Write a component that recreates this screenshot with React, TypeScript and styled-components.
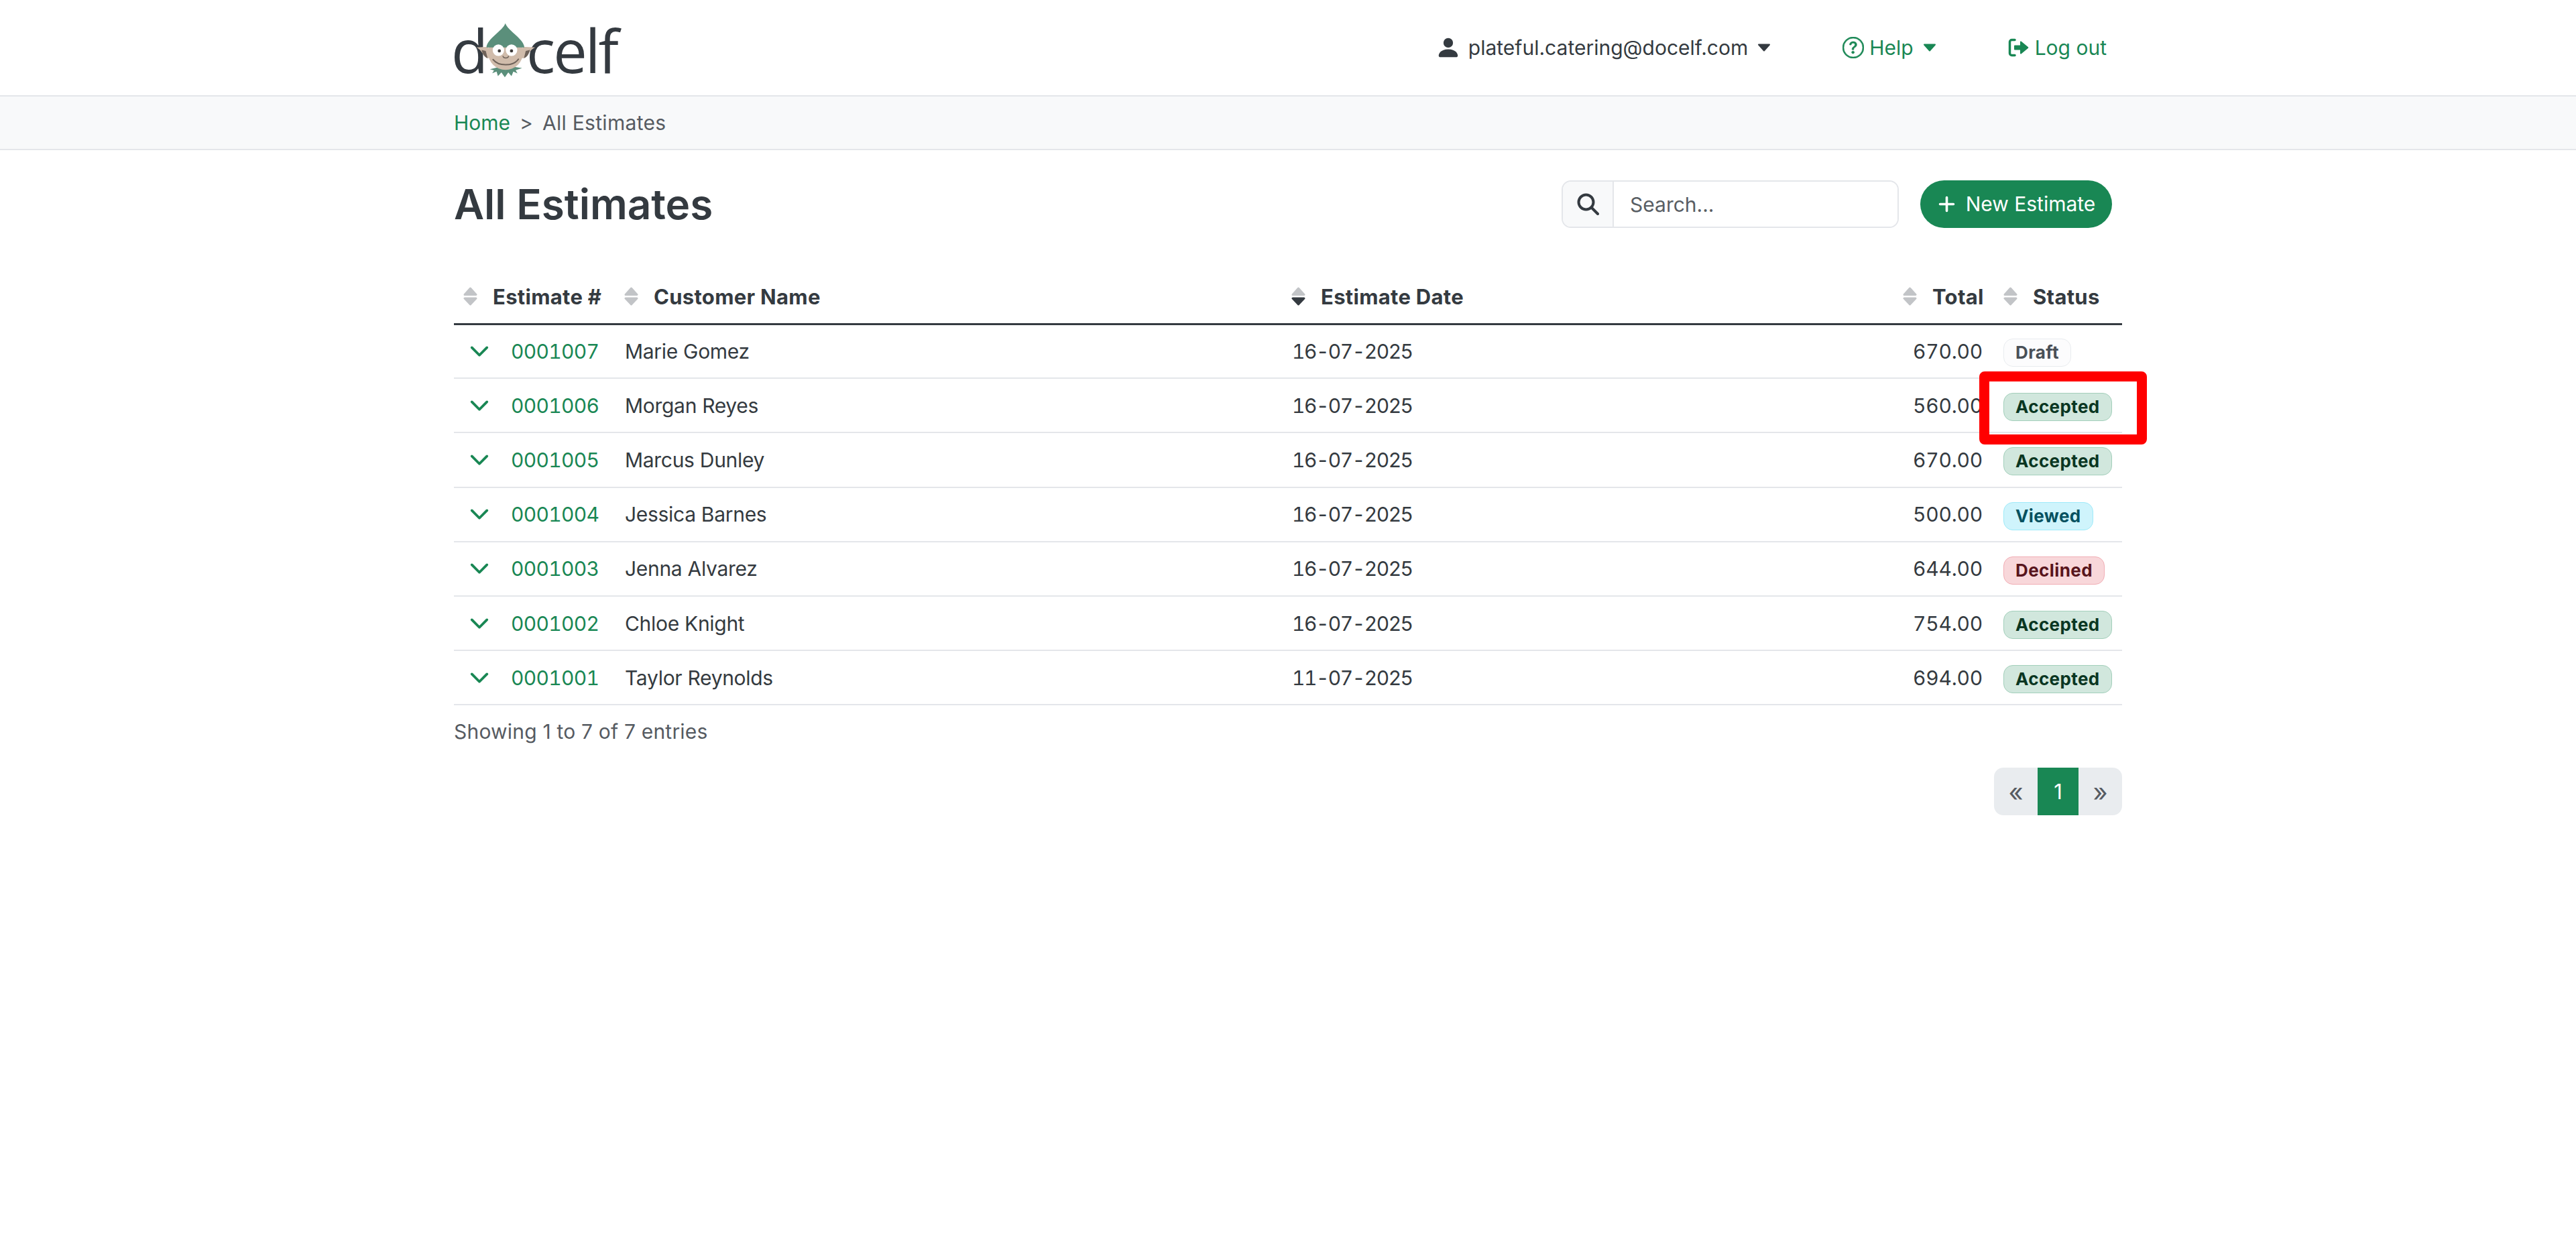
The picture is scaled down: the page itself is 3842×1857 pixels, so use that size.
import React from "react";
import styled, { createGlobalStyle } from "styled-components";
import { BsChevronDown, BsPersonFill, BsPlusLg, BsQuestionCircle } from "react-icons/bs";

const GlobalStyle = createGlobalStyle`
  html, body {
    margin: 0;
    padding: 0;
    background: #fff;
    color: #343a40;
    font-family: Inter, "Noto Sans", sans-serif;
    font-size: 30px;
  }
  * { box-sizing: border-box; }
`;

const Page = styled.div`
  position: relative;
  min-height: 1857px;
  overflow: hidden;
`;

const Container = styled.div`
  width: 2488px;
  margin: 0 auto;
`;

const TopBar = styled.header`
  height: 144px;
  border-bottom: 2px solid #e4e6ea;
`;

const TopBarInner = styled(Container)`
  height: 100%;
  display: flex;
  align-items: center;
  justify-content: space-between;
  padding-right: 23px;
`;

const Logo = styled.div`
  display: flex;
  align-items: flex-start;
  height: 80px;
  margin: 5px 0 0 -4px;
  font-family: "Open Sans", sans-serif;
  font-size: 90px;
  font-weight: 500;
  line-height: 80px;
  letter-spacing: -3px;
  color: #343a40;
`;

const ElfMark = styled.svg`
  width: 95px;
  height: 84px;
  margin: -2px -17px 0 -18px;
  position: relative;
  flex: none;
`;

const Nav = styled.nav`
  display: flex;
  align-items: center;
  gap: 107px;
`;

const NavItem = styled.a<{ $green?: boolean }>`
  display: flex;
  align-items: center;
  gap: ${(p) => (p.$green ? "8px" : "14px")};
  color: ${(p) => (p.$green ? "#198754" : "#343a40")};
  font-size: 30px;
  line-height: 40px;
  white-space: nowrap;
`;

const PersonIcon = styled(BsPersonFill)`
  margin-right: -3px;
  color: #343a40;
`;

const CaretIcon = styled.svg<{ $gap: number }>`
  width: 20px;
  height: 12px;
  margin-left: ${(p) => p.$gap}px;
`;

const Crumbs = styled.div`
  height: 80px;
  background: #f8f9fa;
  border-bottom: 2px solid #e4e6ea;
`;

const CrumbsInner = styled(Container)`
  height: 100%;
  display: flex;
  align-items: center;
  gap: 14px;
  font-size: 30px;
  color: #565b62;
`;

const CrumbLink = styled.a`
  color: #198754;
`;

const CrumbCurrent = styled.span`
  letter-spacing: 0.3px;
`;

const TitleRow = styled.div`
  display: flex;
  align-items: center;
  justify-content: space-between;
  margin-top: 45px;
  height: 71px;
  padding-right: 15px;
`;

const Title = styled.h1`
  margin: 0;
  font-size: 62px;
  font-weight: 600;
  line-height: 71px;
  color: #343a40;
`;

const TitleActions = styled.div`
  display: flex;
  align-items: stretch;
  gap: 32px;
  height: 71px;
`;

const SearchBox = styled.div`
  width: 503px;
  display: flex;
  border: 2px solid #e4e6ea;
  border-radius: 14px;
  overflow: hidden;
`;

const SearchPrefix = styled.div`
  width: 76px;
  display: flex;
  align-items: center;
  justify-content: center;
  background: #f8f9fa;
  border-right: 2px solid #e4e6ea;
`;

const SearchInput = styled.input`
  flex: 1;
  min-width: 0;
  border: 0;
  outline: 0;
  padding: 0 24px;
  font: inherit;
  font-size: 30px;
  color: #343a40;
  &::placeholder {
    color: #595e64;
    opacity: 1;
  }
`;

const NewButton = styled.button`
  width: 286px;
  display: flex;
  align-items: center;
  justify-content: center;
  gap: 14px;
  padding-bottom: 2px;
  border: 0;
  border-radius: 36px;
  background: #198754;
  color: #fff;
  font: inherit;
  font-size: 30px;
  white-space: nowrap;
`;

const Table = styled.table`
  width: 2488px;
  margin-top: 79px;
  border-collapse: collapse;
  table-layout: fixed;
`;

const HeadRow = styled.tr`
  height: 64px;
  border-bottom: 3px solid #343a40;
`;

const HeadCell = styled.th`
  padding: 0 0 16px 14px;
  font-size: 31px;
  font-weight: 700;
  letter-spacing: 0.3px;
  color: #343a40;
  text-align: left;
  white-space: nowrap;
`;

const HeadInner = styled.div<{ $right?: boolean }>`
  display: flex;
  align-items: center;
  gap: 23px;
  padding-right: ${(p) => (p.$right ? "17px" : "0")};
  justify-content: ${(p) => (p.$right ? "space-between" : "flex-start")};
`;

const SortIcon = styled.svg`
  width: 21px;
  height: 28px;
  flex: none;
`;

const Row = styled.tr`
  height: 81.2px;
  border-bottom: 2px solid #e4e6ea;
`;

const Cell = styled.td`
  padding: 0 0 0 15px;
  font-size: 30px;
  letter-spacing: -0.3px;
  color: #343a40;
  white-space: nowrap;
`;

const DateCell = styled(Cell)`
  letter-spacing: -1.5px;
  font-variant-numeric: tabular-nums;
`;

const TotalCell = styled(Cell)`
  padding: 0 17px 0 0;
  text-align: right;
  letter-spacing: -0.2px;
  font-variant-numeric: tabular-nums;
`;

const NumberWrap = styled.div`
  display: flex;
  align-items: center;
  gap: 32px;
  padding-left: 8px;
  color: #198754;
  letter-spacing: -0.7px;
  font-variant-numeric: tabular-nums;
`;

const toneColors: Record<string, { bg: string; line: string; fg: string }> = {
  Draft: { bg: "#fcfcfd", line: "#e9ecef", fg: "#495057" },
  Accepted: { bg: "#d1e7dd", line: "#a3cfbb", fg: "#0a3622" },
  Viewed: { bg: "#cff4fc", line: "#9eeaf9", fg: "#055160" },
  Declined: { bg: "#f8d7da", line: "#f1aeb5", fg: "#58151c" },
};

const Badge = styled.span<{ $tone: string }>`
  display: inline-block;
  height: 42px;
  margin: 5px 0 0 -1px;
  padding: 0 17px;
  border: 1.5px solid ${(p) => toneColors[p.$tone].line};
  border-radius: 14px;
  background: ${(p) => toneColors[p.$tone].bg};
  color: ${(p) => toneColors[p.$tone].fg};
  font-size: 26px;
  font-weight: 700;
  letter-spacing: 0.4px;
  line-height: 39px;
  vertical-align: middle;
`;

const Showing = styled.div`
  margin-top: 17px;
  line-height: 45px;
  font-size: 30px;
  letter-spacing: 0.2px;
  color: #565b62;
`;

const PagerRow = styled.div`
  display: flex;
  justify-content: flex-end;
  margin-top: 31px;
`;

const Pager = styled.div`
  display: flex;
  height: 71px;
  border-radius: 14px;
  overflow: hidden;
  background: #e9ecef;
`;

const PageCell = styled.div<{ $active?: boolean }>`
  width: ${(p) => (p.$active ? "61px" : "65px")};
  display: flex;
  align-items: center;
  justify-content: center;
  background: ${(p) => (p.$active ? "#198754" : "transparent")};
  color: ${(p) => (p.$active ? "#fff" : "#565b62")};
  font-size: ${(p) => (p.$active ? "31px" : "38px")};
`;

const Highlight = styled.div`
  position: absolute;
  left: 2952px;
  top: 554px;
  width: 250px;
  height: 109px;
  border: 15px solid #ff0000;
  border-radius: 8px;
`;

const Caret = ({ color, gap }: { color: string; gap: number }) => (
  <CaretIcon $gap={gap} viewBox="0 0 20 12">
    <path d="M2 1.5h16L10 10.5z" fill={color} stroke={color} strokeWidth="2" strokeLinejoin="round" />
  </CaretIcon>
);

const Sort = ({ active }: { active?: boolean }) => (
  <SortIcon viewBox="0 0 21 28">
    <path d="M10.5 2 19 11.500H2z" fill="#c2c4c7" stroke="#c2c4c7" strokeWidth="3" strokeLinejoin="round" />
    <path d="M2 17H19L10.500 26z" fill={active ? "#343a40" : "#c2c4c7"} stroke={active ? "#343a40" : "#c2c4c7"} strokeWidth="3" strokeLinejoin="round" />
  </SortIcon>
);

const Elf = () => (
  <ElfMark viewBox="115 30 265 245">
    <path d="M178 238 196 243 188 255 207 248 213 268 228 252 243 273 258 252 272 268 280 248 298 256 290 242 318 233 245 222z" fill="#5b8f7b" />
    <path d="M120 143 170 140 190 190 165 190C150 180 140 152 120 143z" fill="#d0bcab" />
    <path d="M375 143 322 140 300 190 327 190C342 180 352 152 375 143z" fill="#d0bcab" />
    <path d="M142 154 160 158 168 190C152 184 146 170 142 154z" fill="#6e6259" />
    <path d="M352 154 334 158 326 190C342 184 348 170 352 154z" fill="#6e6259" />
    <circle cx="246" cy="165" r="76" fill="#d0bcab" />
    <path d="M245 38C235 70 165 105 163 143H328C326 105 255 70 245 38z" fill="#5b8f7b" />
    <circle cx="215" cy="155" r="25" fill="#fff" />
    <circle cx="272" cy="155" r="25" fill="#fff" />
    <circle cx="219" cy="158" r="7" fill="#3d3a38" />
    <circle cx="272" cy="158" r="7" fill="#3d3a38" />
    <path d="M234 180C238 192 256 192 260 180" fill="none" stroke="#6e6259" strokeWidth="4" />
    <path d="M192 196C215 226 280 226 302 194" fill="none" stroke="#6e6259" strokeWidth="6" strokeLinecap="round" />
  </ElfMark>
);

const rows = [
  { no: "0001007", name: "Marie Gomez", date: "16-07-2025", total: "670.00", status: "Draft" },
  { no: "0001006", name: "Morgan Reyes", date: "16-07-2025", total: "560.00", status: "Accepted" },
  { no: "0001005", name: "Marcus Dunley", date: "16-07-2025", total: "670.00", status: "Accepted" },
  { no: "0001004", name: "Jessica Barnes", date: "16-07-2025", total: "500.00", status: "Viewed" },
  { no: "0001003", name: "Jenna Alvarez", date: "16-07-2025", total: "644.00", status: "Declined" },
  { no: "0001002", name: "Chloe Knight", date: "16-07-2025", total: "754.00", status: "Accepted" },
  { no: "0001001", name: "Taylor Reynolds", date: "11-07-2025", total: "694.00", status: "Accepted" },
];

const App = () => {
  return (
    <Page>
      <GlobalStyle />
      <TopBar>
        <TopBarInner>
          <Logo>
            <span>d</span>
            <Elf />
            <span>celf</span>
          </Logo>
          <Nav>
            <NavItem>
              <PersonIcon size={38} />
              plateful.catering@docelf.com
              <Caret color="#343a40" gap={0} />
            </NavItem>
            <NavItem $green>
              <BsQuestionCircle size={32} stroke="#198754" strokeWidth={0.3} />
              Help
              <Caret color="#198754" gap={6} />
            </NavItem>
            <NavItem $green>
              <svg width="32" height="28" viewBox="0 0 32 28">
                <path d="M10 2.5H5.5A3 3 0 0 0 2.500 5.500V22.500A3 3 0 0 0 5.500 25.500H10" fill="none" stroke="#198754" strokeWidth="3.500" strokeLinecap="round" />
                <path d="M10 10.500H18V5.500a1 1 0 0 1 1.700-.7L30 13.300a1 1 0 0 1 0 1.400L19.700 23.200a1 1 0 0 1-1.700-.7V17.500H10a1 1 0 0 1-1-1V11.500a1 1 0 0 1 1-1z" fill="#198754" />
              </svg>
              Log out
            </NavItem>
          </Nav>
        </TopBarInner>
      </TopBar>
      <Crumbs>
        <CrumbsInner>
          <CrumbLink>Home</CrumbLink>
          <span>&gt;</span>
          <CrumbCurrent>All Estimates</CrumbCurrent>
        </CrumbsInner>
      </Crumbs>
      <Container>
        <TitleRow>
          <Title>All Estimates</Title>
          <TitleActions>
            <SearchBox>
              <SearchPrefix>
                <svg width="33" height="33" viewBox="0 0 33 33">
                  <circle cx="13.500" cy="13.500" r="11" fill="none" stroke="#343a40" strokeWidth="4" />
                  <path d="M22 22 31 31" stroke="#343a40" strokeWidth="4" strokeLinecap="round" />
                </svg>
              </SearchPrefix>
              <SearchInput placeholder="Search..." />
            </SearchBox>
            <NewButton>
              <BsPlusLg size={29} stroke="#fff" strokeWidth={1} />
              New Estimate
            </NewButton>
          </TitleActions>
        </TitleRow>
        <Table>
          <colgroup>
            <col width="240" />
            <col width="995" />
            <col width="912" />
            <col width="150" />
            <col width="191" />
          </colgroup>
          <thead>
            <HeadRow>
              <HeadCell><HeadInner><Sort />Estimate #</HeadInner></HeadCell>
              <HeadCell><HeadInner><Sort />Customer Name</HeadInner></HeadCell>
              <HeadCell><HeadInner><Sort active />Estimate Date</HeadInner></HeadCell>
              <HeadCell><HeadInner $right><Sort />Total</HeadInner></HeadCell>
              <HeadCell><HeadInner><Sort />Status</HeadInner></HeadCell>
            </HeadRow>
          </thead>
          <tbody>
            {rows.map((r) => (
              <Row key={r.no}>
                <Cell>
                  <NumberWrap>
                    <BsChevronDown size={30} stroke="#198754" strokeWidth={1} />
                    {r.no}
                  </NumberWrap>
                </Cell>
                <Cell>{r.name}</Cell>
                <DateCell>{r.date}</DateCell>
                <TotalCell>{r.total}</TotalCell>
                <Cell><Badge $tone={r.status}>{r.status}</Badge></Cell>
              </Row>
            ))}
          </tbody>
        </Table>
        <Showing>Showing 1 to 7 of 7 entries</Showing>
        <PagerRow>
          <Pager>
            <PageCell>«</PageCell>
            <PageCell $active>1</PageCell>
            <PageCell>»</PageCell>
          </Pager>
        </PagerRow>
      </Container>
      <Highlight />
    </Page>
  );
};

export default App;
